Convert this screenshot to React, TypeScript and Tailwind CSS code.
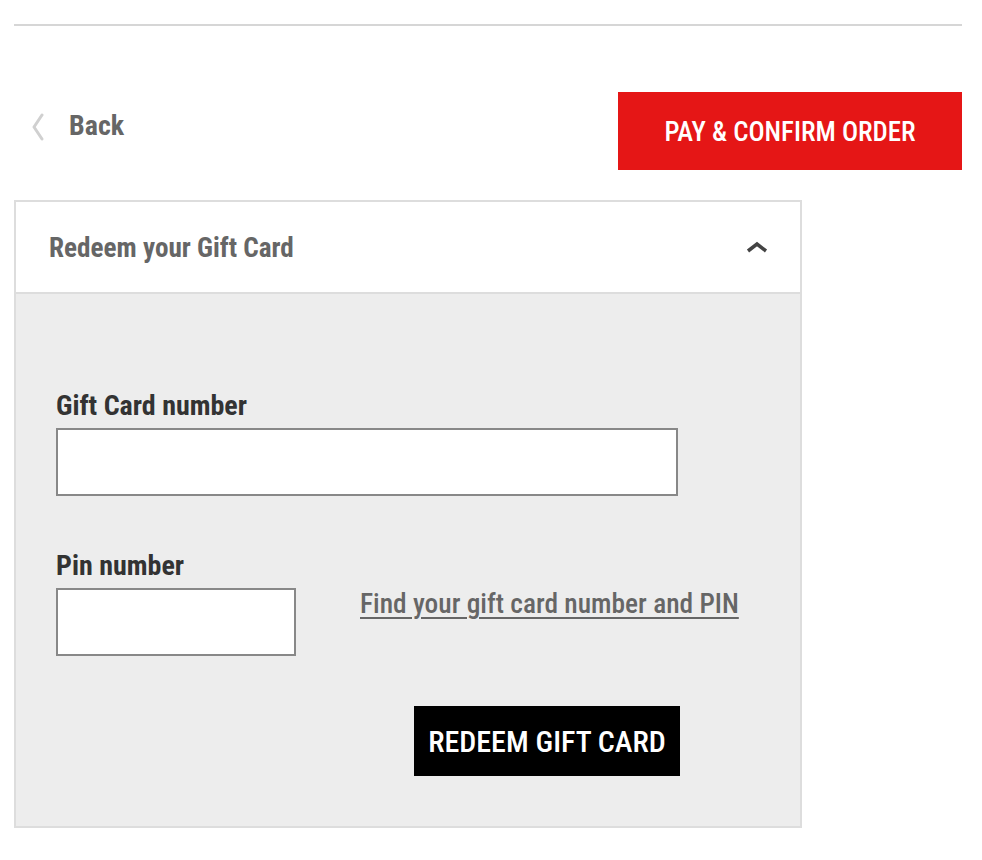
export default function App() {
  return (
    <div className="w-[982px] h-[860px] bg-white font-['Roboto_Condensed','Open_Sans',sans-serif]">
      <div className="pt-6 px-[14px]">
        <div className="h-[2px] w-[948px] bg-[#d6d6d6]" />
      </div>

      <div className="mt-[66px] flex items-start justify-between pl-[30px] pr-[20px]">
        <button className="mt-[17px] flex items-center gap-[24px] text-[#666]">
          <svg width="15" height="28" viewBox="0 0 15 28" fill="none" className="mt-[2px]">
            <polyline points="12,2 4,14 12,26" stroke="#d0d0d0" strokeWidth="3" strokeLinejoin="round" strokeLinecap="round" />
          </svg>
          <span className="text-[28px] leading-[34px] font-bold">Back</span>
        </button>
        <button className="flex h-[78px] w-[344px] items-center justify-center bg-[#e51616] pt-[3px] text-[26.8px] font-medium text-white">
          PAY &amp; CONFIRM ORDER
        </button>
      </div>

      <div className="mt-[30px] ml-[14px] w-[788px] border-2 border-[#dddddd]">
        <div className="flex h-[92px] items-center justify-between border-b-2 border-[#dddddd] bg-white pl-[33px] pr-[32px]">
          <span className="pt-[2px] text-[27.2px] font-bold text-[#666]">Redeem your Gift Card</span>
          <svg width="22" height="12" viewBox="0 0 22 12" fill="none">
            <polyline points="2,10 11,3 20,10" stroke="#444" strokeWidth="3.5" strokeLinejoin="miter" />
          </svg>
        </div>

        <div className="bg-[#ededed] pl-[40px] pt-[96px] pb-[50px]">
          <label className="block text-[28px] leading-[32px] font-bold text-[#333]">Gift Card number</label>
          <input className="mt-[6px] block h-[68px] w-[622px] border-2 border-[#888] bg-white outline-none" />

          <label className="mt-[54px] block text-[28px] leading-[32px] font-bold text-[#333]">Pin number</label>
          <div className="mt-[6px] flex items-start">
            <input className="block h-[68px] w-[240px] border-2 border-[#888] bg-white outline-none" />
            <a href="#" className="ml-[64px] mt-[-1px] text-[27.4px] leading-[34px] font-medium text-[#666] underline underline-offset-[4px] decoration-2">
              Find your gift card number and PIN
            </a>
          </div>

          <div className="mt-[50px] flex w-[624px] justify-end">
            <button className="flex h-[70px] w-[266px] items-center justify-center bg-black pt-[1px] text-[30px] font-medium text-white">
              REDEEM GIFT CARD
            </button>
          </div>
        </div>
      </div>
    </div>
  );
}
